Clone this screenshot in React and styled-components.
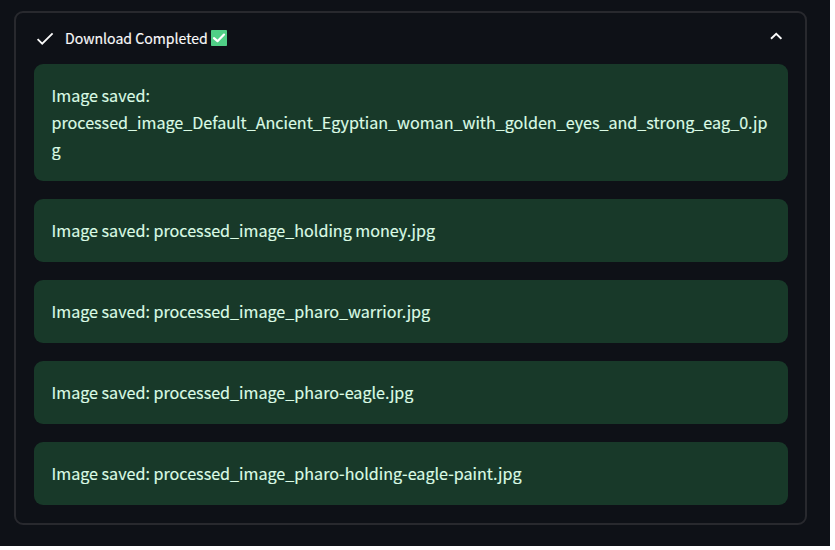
import React from "react";
import styled, { createGlobalStyle } from "styled-components";

const GlobalStyle = createGlobalStyle`
  * { box-sizing: border-box; }
  body { margin: 0; background: #ffffff; font-family: "Noto Sans CJK SC", "Noto Sans", sans-serif; }
`;

const Page = styled.main`
  width: 830px;
  height: 546px;
  padding: 11px 0 0 14px;
  background: #0e1117;
`;

const Expander = styled.section`
  width: 793px;
  height: 514px;
  padding: 0 17px 0 18px;
  border: 2px solid #28292e;
  border-radius: 9px;
`;

const Header = styled.header`
  display: flex;
  align-items: center;
  height: 51px;
  color: #fafafa;
`;

const CheckIcon = styled.svg`
  width: 18px;
  height: 18px;
  margin: 1px 11px 0 2px;
`;

const Title = styled.span`
  width: 143px;
  margin-bottom: 2px;
  font-size: 14.1px;
  line-height: 24px;
  white-space: nowrap;
  -webkit-text-stroke: 0.15px currentColor;
`;

const Badge = styled.svg`
  width: 16px;
  height: 16px;
  margin: 0 0 1px 3px;
`;

const Chevron = styled.svg`
  width: 12px;
  height: 8px;
  margin: -5px 6px 0 auto;
`;

const List = styled.div`
  display: grid;
  grid-template-columns: minmax(0, 1fr);
  gap: 18px;
`;

const Alert = styled.div`
  padding: 18px 18px 18px 17.5px;
  border-radius: 9px;
  background: #183929;
  color: #dbfbe5;
  font-size: 16.13px;
  line-height: 27px;
  overflow-wrap: break-word;
  -webkit-text-stroke: 0.15px currentColor;
`;

const files = [
  "processed_image_Default_Ancient_Egyptian_woman_with_golden_eyes_and_strong_eag_0.jpg",
  "processed_image_holding money.jpg",
  "processed_image_pharo_warrior.jpg",
  "processed_image_pharo-eagle.jpg",
  "processed_image_pharo-holding-eagle-paint.jpg",
];

export default function App() {
  return (
    <Page>
      <GlobalStyle />
      <Expander>
        <Header>
          <CheckIcon viewBox="0 0 18 18" fill="none" stroke="currentColor" strokeWidth="1.8">
            <path d="M1.6 9.2 6.2 13.7 16.6 3.4" />
          </CheckIcon>
          <Title>Download Completed</Title>
          <Badge viewBox="0 0 16 16" fill="none">
            <rect width="16" height="16" rx="0.8" fill="#50cf86" />
            <path d="M3 8.2 6.5 11.2 13 4.6" stroke="#fff" strokeWidth="2.2" strokeLinecap="round" strokeLinejoin="round" />
          </Badge>
          <Chevron viewBox="0 0 12 8" fill="none" stroke="currentColor" strokeWidth="1.9">
            <path d="M1 6.8 6.2 1.8 11.4 6.8" />
          </Chevron>
        </Header>
        <List>
          {files.map((file) => (
            <Alert key={file}>Image saved: {file}</Alert>
          ))}
        </List>
      </Expander>
    </Page>
  );
}
